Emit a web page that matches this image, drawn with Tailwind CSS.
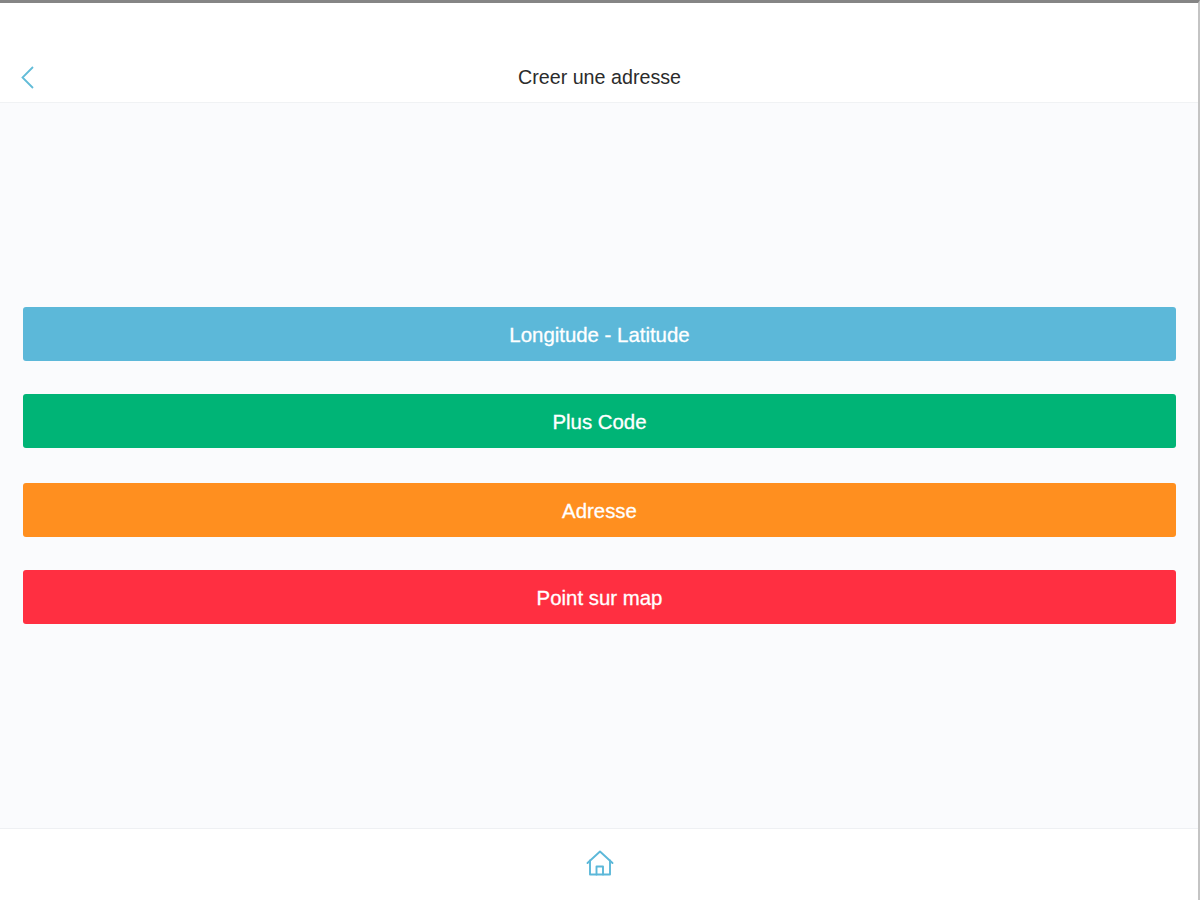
<!DOCTYPE html>
<html lang="fr">
<head>
  <meta charset="UTF-8" />
  <meta name="viewport" content="width=device-width, initial-scale=1.0" />
  <title>Creer une adresse</title>
  <script src="https://cdn.jsdelivr.net/npm/@tailwindcss/browser@4"></script>
</head>
<body class="bg-white font-['Liberation_Sans',Arial,sans-serif] overflow-hidden">
  <div class="h-[900px] flex flex-col border-t-[3px] border-r-2 border-t-[#858585] border-r-[#c4c4c4]">
    <!-- header -->
    <header class="h-[100px] shrink-0 flex items-end relative border-b border-[#f0f2f4] bg-white">
      <a href="#" class="absolute left-[21px] top-[63px] text-[#62bcd8]">
        <svg width="13" height="23" viewBox="0 0 13 23" fill="none" stroke="currentColor" stroke-width="1.8"><path d="M12 1 L1.5 11.5 L12 22" /></svg>
      </a>
      <h1 class="w-full text-center text-[19.7px] leading-[24px] text-[#2b2b2b] pb-[13px] pl-[1px]">Creer une adresse</h1>
    </header>

    <!-- address type buttons -->
    <main class="flex-1 bg-[#fafbfd] pt-[204px] pl-[23px] pr-[22px]">
      <button class="block w-full h-[54px] pt-[2px] mb-[33px] rounded-[3px] bg-[#5cb8d9] text-white text-[20.4px] [-webkit-text-stroke:0.3px_white]">Longitude - Latitude</button>
      <button class="block w-full h-[54px] pt-[2px] mb-[35px] rounded-[3px] bg-[#00b476] text-white text-[20.4px] [-webkit-text-stroke:0.3px_white]">Plus Code</button>
      <button class="block w-full h-[54px] pt-[2px] mb-[33px] rounded-[3px] bg-[#ff8f1f] text-white text-[20.4px] [-webkit-text-stroke:0.3px_white]">Adresse</button>
      <button class="block w-full h-[54px] pt-[2px] rounded-[3px] bg-[#ff2f41] text-white text-[20.4px] [-webkit-text-stroke:0.3px_white]">Point sur map</button>
    </main>

    <!-- bottom nav -->
    <footer class="h-[72px] shrink-0 bg-white border-t border-[#eef0f3] flex justify-center pt-[21px] pl-[1px]">
      <a href="#" class="text-[#5cb8d9] block h-[28px]">
        <svg width="28" height="26" viewBox="0 0 28 26" fill="none" stroke="currentColor" stroke-width="1.9" stroke-linejoin="round" stroke-linecap="round">
          <path d="M1.5 13 L14 1.5 L26.5 13" />
          <path d="M4 10.5 V24.5 H24 V10.5" />
          <path d="M10.5 24.5 V16.5 H17 V24.5" />
        </svg>
      </a>
    </footer>
  </div>
</body>
</html>
